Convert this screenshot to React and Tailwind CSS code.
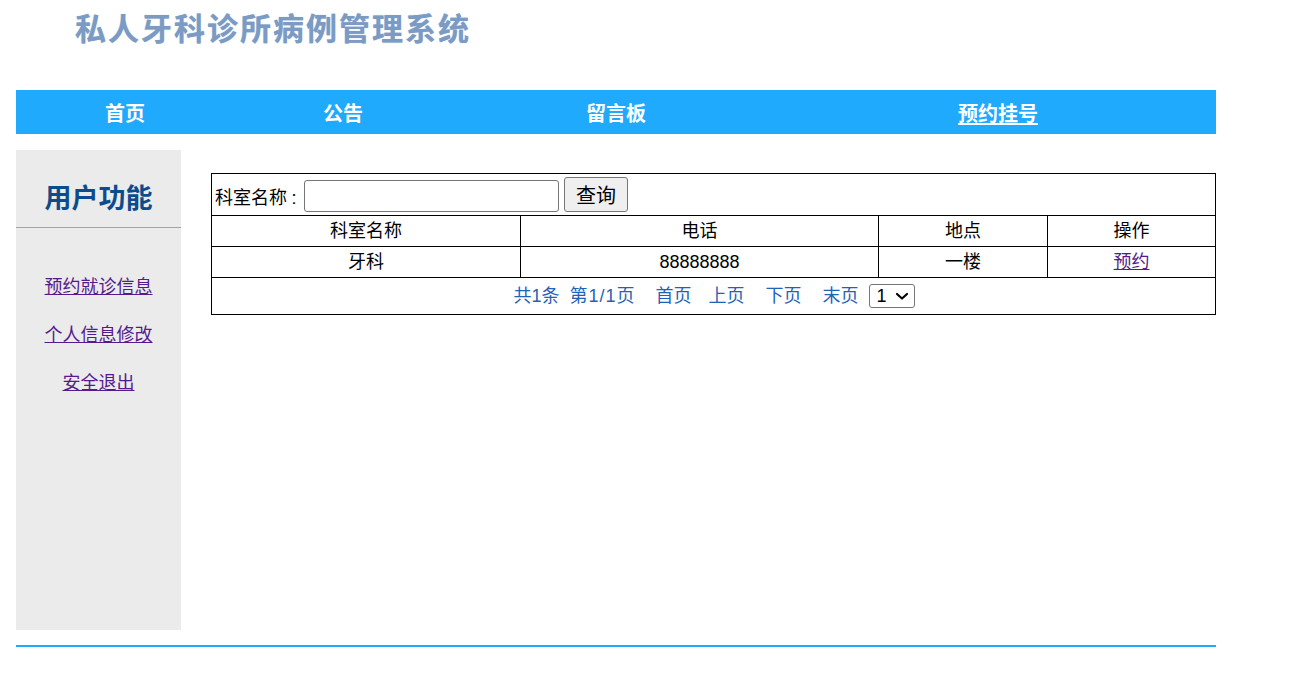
export default function App() {
  const font = { fontFamily: '"Liberation Sans", "Noto Sans CJK SC", sans-serif' };
  return (
    <div className="w-[1303px] h-[674px] bg-white text-black" style={font}>
      <div className="w-[1200px] ml-4">
        <div className="h-[90px] pl-[59px] pt-[5px]">
          <div
            className="text-[31px] leading-[44px] font-bold text-[#7b9bc4] tracking-[2px]"
            style={{ fontFamily: '"Noto Sans CJK SC", serif', textShadow: '0 0 1px #9fb7d6' }}
          >
            私人牙科诊所病例管理系统
          </div>
        </div>

        <div className="h-[44px] bg-[#1faafe] flex items-center pt-[3px] text-white text-[20px] font-bold">
          <div className="w-[218px] text-center">首页</div>
          <div className="w-[218px] text-center">公告</div>
          <div className="w-[328px] text-center">留言板</div>
          <div className="w-[436px] text-center underline underline-offset-2">预约挂号</div>
        </div>

        <div className="flex mt-4">
          <div className="w-[165px] h-[480px] bg-[#ebebeb]">
            <div className="h-[78px] border-b border-[#a3a3a3] flex items-end justify-center pb-[8px] text-[27px] font-bold text-[#0d4c8c]">
              用户功能
            </div>
            <div className="flex flex-col items-center pt-[45px] gap-[20px] text-[18px] leading-[28px] text-[#551a8b]">
              <a href="#" className="underline">预约就诊信息</a>
              <a href="#" className="underline">个人信息修改</a>
              <a href="#" className="underline">安全退出</a>
            </div>
          </div>

          <div className="flex-1 pl-[30px] pt-[23px]">
            <table className="w-[1005px] border-collapse border border-black text-[18px]">
              <tbody>
                <tr className="h-[42px]">
                  <td colSpan={4} className="border border-black px-[3px]">
                    <div className="flex items-center pt-[2px]">
                      <span className="mt-[6px]">科室名称</span>
                      <span className="mt-[6px] w-[14px] text-center">:</span>
                      <input className="w-[255px] h-[32px] border border-[#767676] rounded-[3px] ml-[3px]" />
                      <button className="ml-[5px] h-[35px] w-[64px] pt-[3px] text-[20px] bg-[#efefef] border border-[#767676] rounded-[3px] mb-[3px]">查询</button>
                    </div>
                  </td>
                </tr>
                <tr className="h-[31px] text-center">
                  <td className="border border-black w-[309px]">科室名称</td>
                  <td className="border border-black w-[358px]">电话</td>
                  <td className="border border-black w-[169px]">地点</td>
                  <td className="border border-black">操作</td>
                </tr>
                <tr className="h-[31px] text-center">
                  <td className="border border-black">牙科</td>
                  <td className="border border-black">88888888</td>
                  <td className="border border-black">一楼</td>
                  <td className="border border-black">
                    <a href="#" className="underline text-[#551a8b]">预约</a>
                  </td>
                </tr>
                <tr className="h-[37px]">
                  <td colSpan={4} className="border border-black text-[#1f63b8]">
                    <div className="flex items-center justify-center pl-[1px]">
                      <span>共1条</span>
                      <span className="ml-[10px] tracking-[1px]">第1/1页</span>
                      <span className="ml-[20px]">首页</span>
                      <span className="ml-[17px]">上页</span>
                      <span className="ml-[21px]">下页</span>
                      <span className="ml-[21px]">末页</span>
                      <span className="ml-[10px] inline-flex items-center justify-between w-[46px] h-[24px] border border-[#767676] rounded-[3px] pl-[7px] pr-[5px] text-black text-[18px] leading-none">
                        1
                        <svg width="14" height="10" viewBox="0 0 14 10" fill="none" stroke="black" strokeWidth="2.2" strokeLinecap="round" strokeLinejoin="round">
                          <path d="M2 3l5 4.5L12 3" />
                        </svg>
                      </span>
                    </div>
                  </td>
                </tr>
              </tbody>
            </table>
          </div>
        </div>

        <div className="mt-[15px] h-[2px] bg-[#1faafe]" />
      </div>
    </div>
  );
}
